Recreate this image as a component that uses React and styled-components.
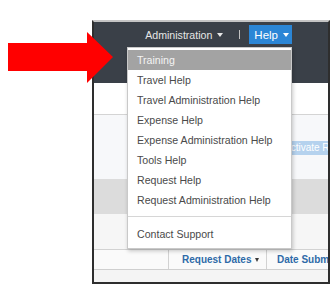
import styled, { createGlobalStyle } from "styled-components";

const GlobalStyle = createGlobalStyle`
    html, body {
        margin: 0;
        padding: 0;
        background: #ffffff;
    }
    body {
        font-family: "Liberation Sans", Arial, sans-serif;
    }
`;

const Page = styled.div`
    position: relative;
    width: 336px;
    height: 298px;
    overflow: hidden;
    background: #ffffff;
`;

const Frame = styled.div`
    box-sizing: border-box;
    width: 238px;
    height: 264px;
    margin: 20px 0 0 92px;
    border: 2px solid #2e2e2e;
    border-top-color: #c4c4c4;
    display: flex;
    flex-direction: column;
    overflow: hidden;
`;

const Header = styled.div`
    height: 61px;
    flex-shrink: 0;
    background: #3a4048;
`;

const NavBar = styled.div`
    display: flex;
    justify-content: flex-end;
    align-items: center;
    height: 19px;
    padding: 3px 36px 0 0;
`;

const NavLink = styled.div`
    display: flex;
    align-items: center;
    gap: 5px;
    height: 19px;
    padding: ${(p) => (p.$active ? "0 3px 0 5px" : "0")};
    background: ${(p) => (p.$active ? "#2b86d6" : "transparent")};
    color: ${(p) => (p.$active ? "#ffffff" : "#e6e6e6")};
    font-size: ${(p) => (p.$active ? "11.5px" : "10.6px")};
    white-space: nowrap;
`;

const Caret = styled.span`
    width: 0;
    height: 0;
    border-left: 3.5px solid transparent;
    border-right: 3.5px solid transparent;
    border-top: 4px solid currentColor;
    margin-top: 1px;
`;

const Separator = styled.span`
    width: 1px;
    height: 9px;
    margin: 0 9px 0 16px;
    background: #c2c2c2;
`;

const HelpItem = styled.div`
    position: relative;
`;

const Menu = styled.ul`
    position: absolute;
    right: 0;
    top: calc(100% + 3px);
    z-index: 5;
    box-sizing: border-box;
    width: 165px;
    margin: 0;
    padding: 2px 0 4px;
    list-style: none;
    background: #ffffff;
    border: 1px solid #c9c9c9;
    box-shadow: 1px 2px 4px rgba(0, 0, 0, 0.22);
`;

const MenuItem = styled.li`
    height: 20px;
    line-height: 20px;
    padding-left: 9px;
    font-size: 10.6px;
    color: ${(p) => (p.$active ? "#f4f4f4" : "#4a4a4a")};
    background: ${(p) => (p.$active ? "#a3a3a3" : "transparent")};
    white-space: nowrap;
`;

const Divider = styled.li`
    height: 1px;
    margin: 6px 0 7px;
    background: #d6d6d6;
`;

const TopArea = styled.div`
    height: 31px;
    flex-shrink: 0;
    background: #ffffff;
    border-bottom: 1px solid #d4d4d4;
`;

const Toolbar = styled.div`
    display: flex;
    justify-content: flex-end;
    align-items: center;
    height: 64px;
    flex-shrink: 0;
    background: #f7f8fa;
`;

const ActivateButton = styled.div`
    width: 44px;
    height: 14px;
    margin-top: 2px;
    padding-left: 4px;
    overflow: hidden;
    white-space: nowrap;
    background: #b5d2ee;
    color: #ffffff;
    font-size: 10px;
    line-height: 14px;
`;

const Band = styled.div`
    height: 35px;
    flex-shrink: 0;
    background: ${(p) => p.$tone};
`;

const ColumnHeader = styled.div`
    display: flex;
    height: 19px;
    flex-shrink: 0;
    background: #fafafa;
    border-top: 1px solid #d2d2d2;
    border-bottom: 1px solid #cfcfcf;
`;

const Column = styled.div`
    display: flex;
    align-items: center;
    gap: 4px;
    width: ${(p) => p.$width}px;
    flex-shrink: 0;
    box-sizing: border-box;
    padding-left: ${(p) => p.$pad}px;
    border-right: ${(p) => (p.$last ? "none" : "1px solid #d2d2d2")};
    color: #2e6aa8;
    font-size: 10px;
    font-weight: bold;
    white-space: nowrap;
    overflow: hidden;
`;

const SmallCaret = styled.span`
    width: 0;
    height: 0;
    border-left: 2.5px solid transparent;
    border-right: 2.5px solid transparent;
    border-top: 4px solid #3a3a3a;
`;

const Body = styled.div`
    flex: 1;
    background: #f4f4f4;
`;

const Arrow = styled.svg`
    position: absolute;
    left: 8px;
    top: 31px;
    z-index: 10;
`;

const helpItems = [
    "Travel Help",
    "Travel Administration Help",
    "Expense Help",
    "Expense Administration Help",
    "Tools Help",
    "Request Help",
    "Request Administration Help",
];

const App = () => {
    return (
        <Page>
            <GlobalStyle />
            <Frame>
                <Header>
                    <NavBar>
                        <NavLink>
                            Administration
                            <Caret />
                        </NavLink>
                        <Separator />
                        <HelpItem>
                            <NavLink $active>
                                Help
                                <Caret />
                            </NavLink>
                            <Menu>
                                <MenuItem $active>Training</MenuItem>
                                {helpItems.map((item) => (
                                    <MenuItem key={item}>{item}</MenuItem>
                                ))}
                                <Divider />
                                <MenuItem>Contact Support</MenuItem>
                            </Menu>
                        </HelpItem>
                    </NavBar>
                </Header>
                <TopArea />
                <Toolbar>
                    <ActivateButton>Activate Request</ActivateButton>
                </Toolbar>
                <Band $tone="#dcdcdc" />
                <Band $tone="#f6f6f6" />
                <ColumnHeader>
                    <Column $width={75} $pad={0} />
                    <Column $width={98} $pad={13}>
                        Request Dates
                        <SmallCaret />
                    </Column>
                    <Column $width={70} $pad={10} $last>
                        Date Submitted
                    </Column>
                </ColumnHeader>
                <Body />
            </Frame>
            <Arrow width="106" height="53" viewBox="0 0 106 53">
                <polygon points="0,12 79,12 79,1 105,26 79,52 79,40 0,40" fill="#ff0000" />
            </Arrow>
        </Page>
    );
};

export default App;
